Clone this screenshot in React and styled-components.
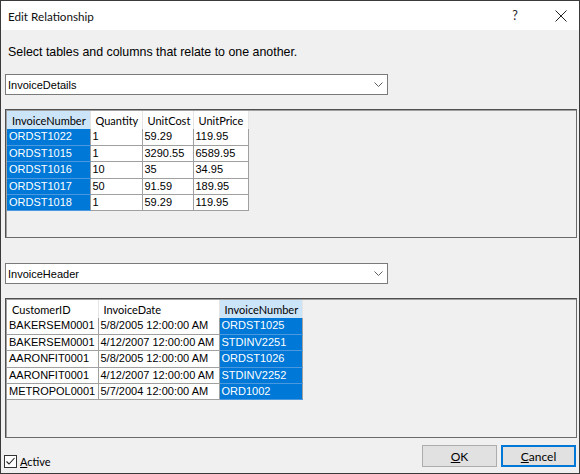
import React from 'react';
import styled, { createGlobalStyle } from 'styled-components';

const GlobalStyle = createGlobalStyle`
  html, body { margin: 0; padding: 0; background: #ffffff; }
  * { box-sizing: border-box; }
`;

const detailsCols = [
  { name: 'InvoiceNumber', width: 83 },
  { name: 'Quantity', width: 52 },
  { name: 'UnitCost', width: 51 },
  { name: 'UnitPrice', width: 55 },
];

const detailsRows = [
  ['ORDST1022', '1', '59.29', '119.95'],
  ['ORDST1015', '1', '3290.55', '6589.95'],
  ['ORDST1016', '10', '35', '34.95'],
  ['ORDST1017', '50', '91.59', '189.95'],
  ['ORDST1018', '1', '59.29', '119.95'],
];

const headerCols = [
  { name: 'CustomerID', width: 91 },
  { name: 'InvoiceDate', width: 121 },
  { name: 'InvoiceNumber', width: 83 },
];

const headerRows = [
  ['BAKERSEM0001', '5/8/2005 12:00:00 AM', 'ORDST1025'],
  ['BAKERSEM0001', '4/12/2007 12:00:00 AM', 'STDINV2251'],
  ['AARONFIT0001', '5/8/2005 12:00:00 AM', 'ORDST1026'],
  ['AARONFIT0001', '4/12/2007 12:00:00 AM', 'STDINV2252'],
  ['METROPOL0001', '5/7/2004 12:00:00 AM', 'ORD1002'],
];

const Chevron = () => (
  <svg width="9" height="5" viewBox="0 0 9 5">
    <path d="M0.5 0.5 L4.5 4.5 L8.5 0.5" fill="none" stroke="#606060" strokeWidth="1" />
  </svg>
);

const Grid = ({ cols, rows, selected }) => (
  <Table>
    <colgroup>
      {cols.map((c) => (
        <col key={c.name} style={{ width: c.width }} />
      ))}
    </colgroup>
    <thead>
      <tr>
        {cols.map((c, i) => (
          <Th key={c.name} $selected={i === selected}>{c.name}</Th>
        ))}
      </tr>
    </thead>
    <tbody>
      {rows.map((r, ri) => (
        <tr key={ri}>
          {r.map((v, ci) => (
            <Td key={ci} $selected={ci === selected}>{v}</Td>
          ))}
        </tr>
      ))}
    </tbody>
  </Table>
);

const App = () => {
  return (
    <>
      <GlobalStyle />
      <Window>
        <TitleBar>
          <Title>Edit Relationship</Title>
          <TitleButtons>
            <HelpBtn>?</HelpBtn>
            <CloseBtn>
              <svg width="12" height="12" viewBox="0 0 12 12">
                <path d="M0.5 0.5 L11.5 11.5 M11.5 0.5 L0.5 11.5" stroke="#222" strokeWidth="1" />
              </svg>
            </CloseBtn>
          </TitleButtons>
        </TitleBar>
        <Body>
          <Prompt>Select tables and columns that relate to one another.</Prompt>
          <Combo $top={14}>
            <span>InvoiceDetails</span>
            <Chevron />
          </Combo>
          <Panel $top={14} $height={129}>
            <Grid cols={detailsCols} rows={detailsRows} selected={0} />
          </Panel>
          <Combo $top={25}>
            <span>InvoiceHeader</span>
            <Chevron />
          </Combo>
          <Panel $top={14} $height={140}>
            <Grid cols={headerCols} rows={headerRows} selected={2} />
          </Panel>
          <Footer>
            <CheckLabel>
              <CheckBox>
                <svg width="11" height="11" viewBox="0 0 11 11">
                  <path d="M1.5 5.5 L4 8 L9.5 2" fill="none" stroke="#222" strokeWidth="1.1" />
                </svg>
              </CheckBox>
              <span><u>A</u>ctive</span>
            </CheckLabel>
            <Buttons>
              <Button><u>O</u>K</Button>
              <Button $default><u>C</u>ancel</Button>
            </Buttons>
          </Footer>
        </Body>
      </Window>
    </>
  );
};

export default App;

const Window = styled.div`
  width: 580px;
  height: 474px;
  border: 1px solid #3a3a3a;
  background: #f0f0f0;
  display: flex;
  flex-direction: column;
  overflow: hidden;
  font-family: "Liberation Sans", Arial, sans-serif;
  color: #000;
`;

const TitleBar = styled.div`
  height: 29px;
  background: #ffffff;
  display: flex;
  align-items: center;
  justify-content: space-between;
  padding-left: 7px;
`;

const Title = styled.div`
  font-family: "Lato", "Liberation Sans", sans-serif;
  font-size: 11.7px;
  color: #111;
`;

const TitleButtons = styled.div`
  display: flex;
  align-items: center;
  height: 100%;
`;

const HelpBtn = styled.div`
  width: 30px;
  height: 100%;
  display: flex;
  align-items: center;
  justify-content: center;
  font-family: "Lato", sans-serif;
  font-size: 12.5px;
  color: #222;
  margin-right: 13px;
`;

const CloseBtn = styled.div`
  width: 36px;
  height: 100%;
  display: flex;
  align-items: center;
  justify-content: center;
`;

const Body = styled.div`
  flex: 1;
  display: flex;
  flex-direction: column;
  padding: 0 2px 0 4px;
`;

const Prompt = styled.div`
  margin-top: 14px;
  padding-left: 3px;
  font-size: 12.4px;
  line-height: 16px;
  height: 16px;
`;

const Combo = styled.div`
  margin-top: ${(p) => p.$top}px;
  width: 383px;
  height: 21px;
  background: #fff;
  border: 1px solid #7a7a7a;
  display: flex;
  align-items: center;
  justify-content: space-between;
  padding: 0 4px 0 2px;
  font-size: 11px;
`;

const Panel = styled.div`
  margin-top: ${(p) => p.$top}px;
  height: ${(p) => p.$height}px;
  width: 572px;
  border: 1px solid #505050;
  border-right-color: #6a6a6a;
  border-bottom-color: #6a6a6a;
  box-shadow: inset 1px 1px 0 #a0a0a0;
  padding: 1px 0 0 1px;
  background: #f0f0f0;
`;

const Table = styled.table`
  border-collapse: collapse;
  table-layout: fixed;
  font-size: 11px;
  background: #fff;
`;

const Th = styled.th`
  height: 18px;
  padding: 0 0 0 5px;
  font-family: "Lato", "Liberation Sans", sans-serif;
  font-weight: normal;
  font-size: 11px;
  text-align: left;
  white-space: nowrap;
  overflow: hidden;
  background: ${(p) => (p.$selected ? '#cce4f7' : '#ffffff')};
  border-right: 1px solid #e5e5e5;
  color: #000;
`;

const Td = styled.td`
  height: 16.4px;
  padding: 0 0 0 2px;
  white-space: nowrap;
  overflow: hidden;
  line-height: 15px;
  border: 1px solid #a0a0a0;
  border-top: none;
  border-left: ${(p) => (p.$selected ? '1px solid #0078d7' : '1px solid #a0a0a0')};
  background: ${(p) => (p.$selected ? '#0078d7' : '#ffffff')};
  color: ${(p) => (p.$selected ? '#ffffff' : '#000000')};
  border-bottom-color: ${(p) => (p.$selected ? '#4a98de' : '#a0a0a0')};
  &:first-child { border-left: none; }
`;

const Footer = styled.div`
  margin-top: 7px;
  display: flex;
  justify-content: space-between;
  align-items: flex-end;
  padding-right: 1px;
`;

const CheckLabel = styled.label`
  display: flex;
  align-items: center;
  gap: 3px;
  margin-left: -1px;
  font-family: "Lato", "Liberation Sans", sans-serif;
  font-size: 11px;
  margin-bottom: -1px;
`;

const CheckBox = styled.span`
  width: 13px;
  height: 13px;
  border: 1px solid #333;
  background: #fff;
  display: flex;
  align-items: center;
  justify-content: center;
`;

const Buttons = styled.div`
  display: flex;
  gap: 4px;
`;

const Button = styled.button`
  width: 75px;
  height: 22px;
  background: #e1e1e1;
  border: ${(p) => (p.$default ? '2px solid #0078d7' : '1px solid #adadad')};
  font-family: "Lato", "Liberation Sans", sans-serif;
  font-size: 12px;
  color: #000;
  padding: 0;
`;
